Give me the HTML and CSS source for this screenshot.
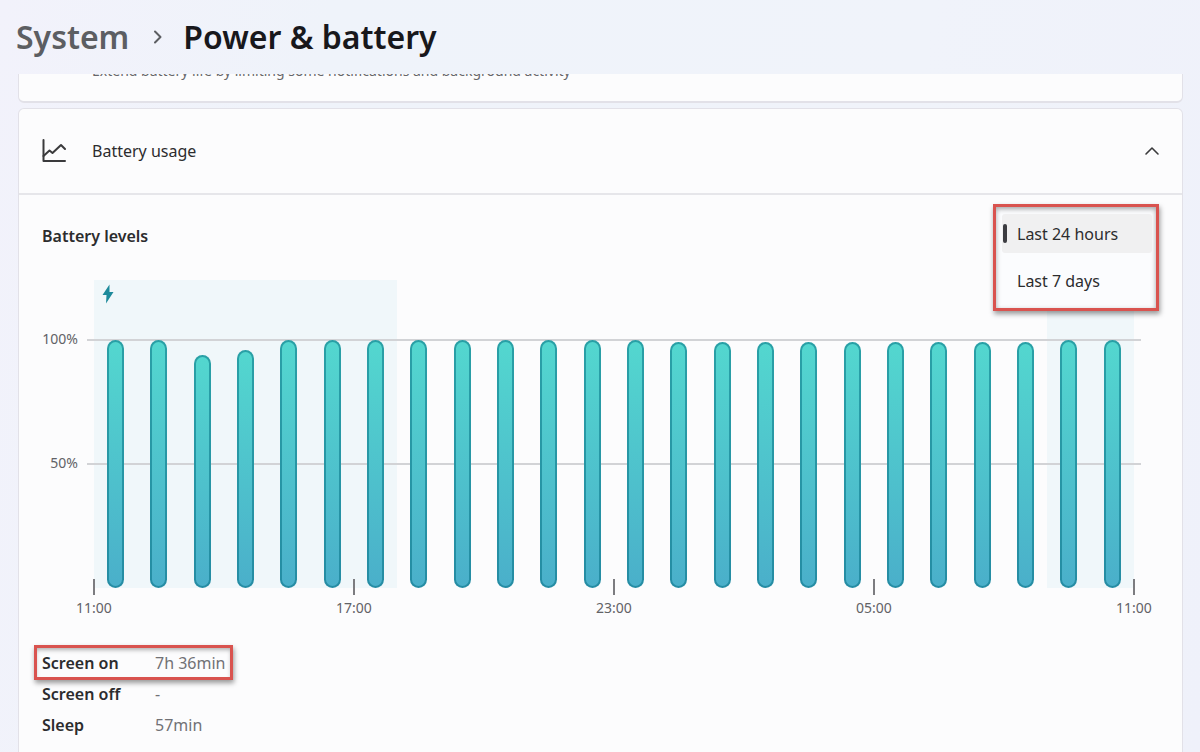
FILE: index.html
```html
<!DOCTYPE html>
<html lang="en">
<head>
    <meta charset="UTF-8">
    <meta name="viewport" content="width=device-width, initial-scale=1.0">
    <title>Power &amp; battery</title>
    <link rel="stylesheet" href="styles.css">
</head>
<body>
    <!-- Breadcrumb heading -->
    <header class="page-header">
        <a class="crumb" href="#system">System</a>
        <svg class="crumb-arrow" viewBox="0 0 10 14" aria-hidden="true"><path d="M2 1.5 L7.5 7 L2 12.5"/></svg>
        <h1>Power &amp; battery</h1>
    </header>

    <!-- Scrolled list of settings cards -->
    <main class="settings">
        <section class="card saver-card">
            <p>Extend battery life by limiting some notifications and background activity</p>
        </section>

        <section class="card">
            <button class="card-toggle" type="button" aria-expanded="true">
                <svg class="usage-icon" viewBox="0 0 24 24" aria-hidden="true">
                    <path d="M1.5 1 V22 H23"/>
                    <path d="M1.5 17 L7.5 11.5 L10.5 14 L19 6 L23 10"/>
                </svg>
                <span>Battery usage</span>
                <svg class="chevron" viewBox="0 0 16 10" aria-hidden="true"><path d="M2 8 L8 2 L14 8"/></svg>
            </button>

            <div class="usage">
                <h2>Battery levels</h2>

                <!-- Open time range menu -->
                <div class="range-menu">
                    <button class="range selected" type="button">Last 24 hours</button>
                    <button class="range" type="button">Last 7 days</button>
                </div>

                <!-- Battery level chart, one bar for each hour -->
                <div class="chart">
                    <span class="level level-full">100%</span>
                    <span class="level level-half">50%</span>
                    <div class="slots" id="slots"></div>
                    <div class="line line-full"></div>
                    <div class="line line-half"></div>
                    <div class="bars" id="bars"></div>
                    <svg class="bolt" viewBox="0 0 12 20" aria-hidden="true"><path d="M7.5 0.5 L0.5 11 H4.5 L4 19.5 L11.5 8 H7.5 Z"/></svg>
                    <div class="hours">
                        <span>11:00</span>
                        <span>17:00</span>
                        <span>23:00</span>
                        <span>05:00</span>
                        <span>11:00</span>
                    </div>
                </div>

                <!-- Totals for the selected range -->
                <dl class="totals">
                    <div class="total highlight"><dt>Screen on</dt><dd>7h 36min</dd></div>
                    <div class="total"><dt>Screen off</dt><dd>-</dd></div>
                    <div class="total"><dt>Sleep</dt><dd>57min</dd></div>
                </dl>
            </div>
        </section>
    </main>

    <script src="script.js"></script>
</body>
</html>
```
FILE: styles.css
```css
* {
    box-sizing: border-box;
}

body {
    margin: 0;
    height: 100vh;
    overflow: hidden;
    display: flex;
    flex-direction: column;
    font-family: "Noto Sans", "Segoe UI", sans-serif;
    font-size: 16px;
    line-height: 22px;
    color: #2c2c2e;
    background: linear-gradient(100deg, #f2f2fb 0%, #eff3fa 25%, #f0f3fa 70%, #eff1fa 100%);
}

button {
    font: inherit;
    color: inherit;
    border: 0;
    background: none;
    text-align: left;
}

svg {
    fill: none;
    stroke: #3a3a3c;
    stroke-linejoin: round;
    stroke-linecap: round;
}

/* Breadcrumb */
.page-header {
    flex: none;
    display: flex;
    align-items: center;
    height: 74px;
    padding: 0 16px;
    font-size: 32px;
    line-height: 46px;
    font-weight: 600;
}

.crumb {
    color: #5c5e62;
    text-decoration: none;
}

.crumb-arrow {
    width: 10px;
    height: 14px;
    margin: 0 20px 0 24px;
    stroke: #5c5e62;
    stroke-width: 2;
}

.page-header h1 {
    margin: 0;
    font-size: inherit;
    font-weight: inherit;
    color: #18181c;
}

/* Cards */
.settings {
    flex: 1;
    overflow: hidden;
    padding: 0 17px 0 18px;
}

.card {
    border: 1px solid #e2e1e8;
    border-bottom-width: 2px;
    border-radius: 6px;
    background: #fcfcfd;
}

/* Mostly scrolled out of view */
.saver-card {
    margin-top: -58px;
    margin-bottom: 5px;
    padding: 43px 73px 19px;
    font-size: 14px;
    color: #66666a;
}

.saver-card p {
    margin: 0;
}

.card-toggle {
    display: flex;
    align-items: center;
    width: 100%;
    height: 86px;
    padding: 0 22px 0 23px;
    border-bottom: 2px solid #e6e6ea;
}

.usage-icon {
    width: 24px;
    height: 24px;
    margin-right: 26px;
    stroke-width: 2;
}

.chevron {
    width: 16px;
    height: 10px;
    margin-left: auto;
    stroke-width: 1.6;
}

.usage {
    position: relative;
    padding: 30px 23px 40px;
}

.usage h2 {
    margin: 0 0 33px;
    font-size: 16px;
    font-weight: 600;
}

/* Time range menu, opened over the chart */
.range-menu {
    position: absolute;
    top: 9px;
    right: 23px;
    display: flex;
    flex-direction: column;
    gap: 10px;
    width: 166px;
    height: 107px;
    padding: 7px 4px 7px 6px;
    border: 3px solid #d9534f;
    background: #fbfcfe;
    box-shadow: 1px 3px 5px rgba(0, 0, 0, 0.4), inset 0 2px 5px rgba(0, 0, 0, 0.35);
}

.range {
    display: flex;
    align-items: center;
    height: 36px;
    padding: 0 0 0 15px;
}

.range.selected {
    height: 39px;
    padding-left: 1px;
    border-radius: 3px;
    background: #f0f0f1;
}

.range.selected::before {
    content: "";
    width: 4px;
    height: 19px;
    margin-right: 10px;
    border-radius: 2px;
    background: #3c3d42;
}

/* Chart: level labels, then the plot with 7px of grid line on each side */
.chart {
    display: grid;
    grid-template-columns: 45px 7px 1fr 7px;
    grid-template-rows: 60px 124px 124px auto;
    padding-right: 18px;
    font-size: 14px;
    line-height: 20px;
    color: #626266;
}

.level {
    grid-column: 1;
    margin: -11px 9px 0 -9px;
    text-align: right;
}

.level-full,
.line-full {
    grid-row: 2;
}

.level-half,
.line-half {
    grid-row: 3;
}

.line {
    grid-column: 2 / 5;
    height: 2px;
    margin-top: -1px;
    background: #d2d3d6;
}

.slots,
.bars {
    grid-column: 3;
    display: grid;
    grid-template-columns: repeat(24, 1fr);
}

.slots {
    grid-row: 1 / 4;
}

.charging {
    background: #f0f7fa;
}

.bars {
    grid-row: 2 / 4;
    align-items: end;
    justify-items: center;
}

.bar {
    width: 17px;
    border: 2px solid rgba(0, 105, 125, 0.5);
    border-radius: 9px;
    background: linear-gradient(#53d7cf, #4aafca) border-box;
}

.bolt {
    grid-column: 3;
    grid-row: 1;
    width: 12px;
    height: 20px;
    margin: 4px 0 0 8px;
    fill: #1d8a9b;
    stroke: none;
}

.hours {
    grid-column: 3;
    grid-row: 4;
    display: flex;
    justify-content: space-between;
    margin: -9px -20px 0;
}

.hours span {
    display: flex;
    flex-direction: column;
    align-items: center;
    gap: 3px;
    width: 40px;
}

.hours span::before {
    content: "";
    width: 2px;
    height: 16px;
    background: #7c7c80;
}

/* Totals */
.totals {
    width: fit-content;
    margin: 29px 0 0 -6px;
}

.total {
    display: grid;
    grid-template-columns: 113px 1fr;
    align-items: center;
    height: 31px;
    padding: 0 6px;
}

.total dt {
    font-weight: 600;
}

.total dd {
    margin: 0;
    color: #717175;
}

.highlight {
    outline: 3px solid #d9534f;
    outline-offset: -1px;
    box-shadow: 1px 3px 5px 2px rgba(0, 0, 0, 0.4), inset 0 3px 4px rgba(0, 0, 0, 0.3);
}
```
FILE: script.js
```javascript
// Battery level in percent for each hour
const levels = [100, 100, 94, 96, 100, 100, 100, 100, 100, 100, 100, 100,
    100, 99, 99, 99, 99, 99, 99, 99, 99, 99, 100, 100];

const slots = document.getElementById('slots');
const bars = document.getElementById('bars');

levels.forEach((level, hour) => {
    // Shade the hours when the charger was plugged in
    const charging = hour < 7 || hour > 21;
    slots.innerHTML += `<div class="${charging ? 'charging' : ''}"></div>`;
    bars.innerHTML += `<div class="bar" style="height: ${level}%"></div>`;
});
```
